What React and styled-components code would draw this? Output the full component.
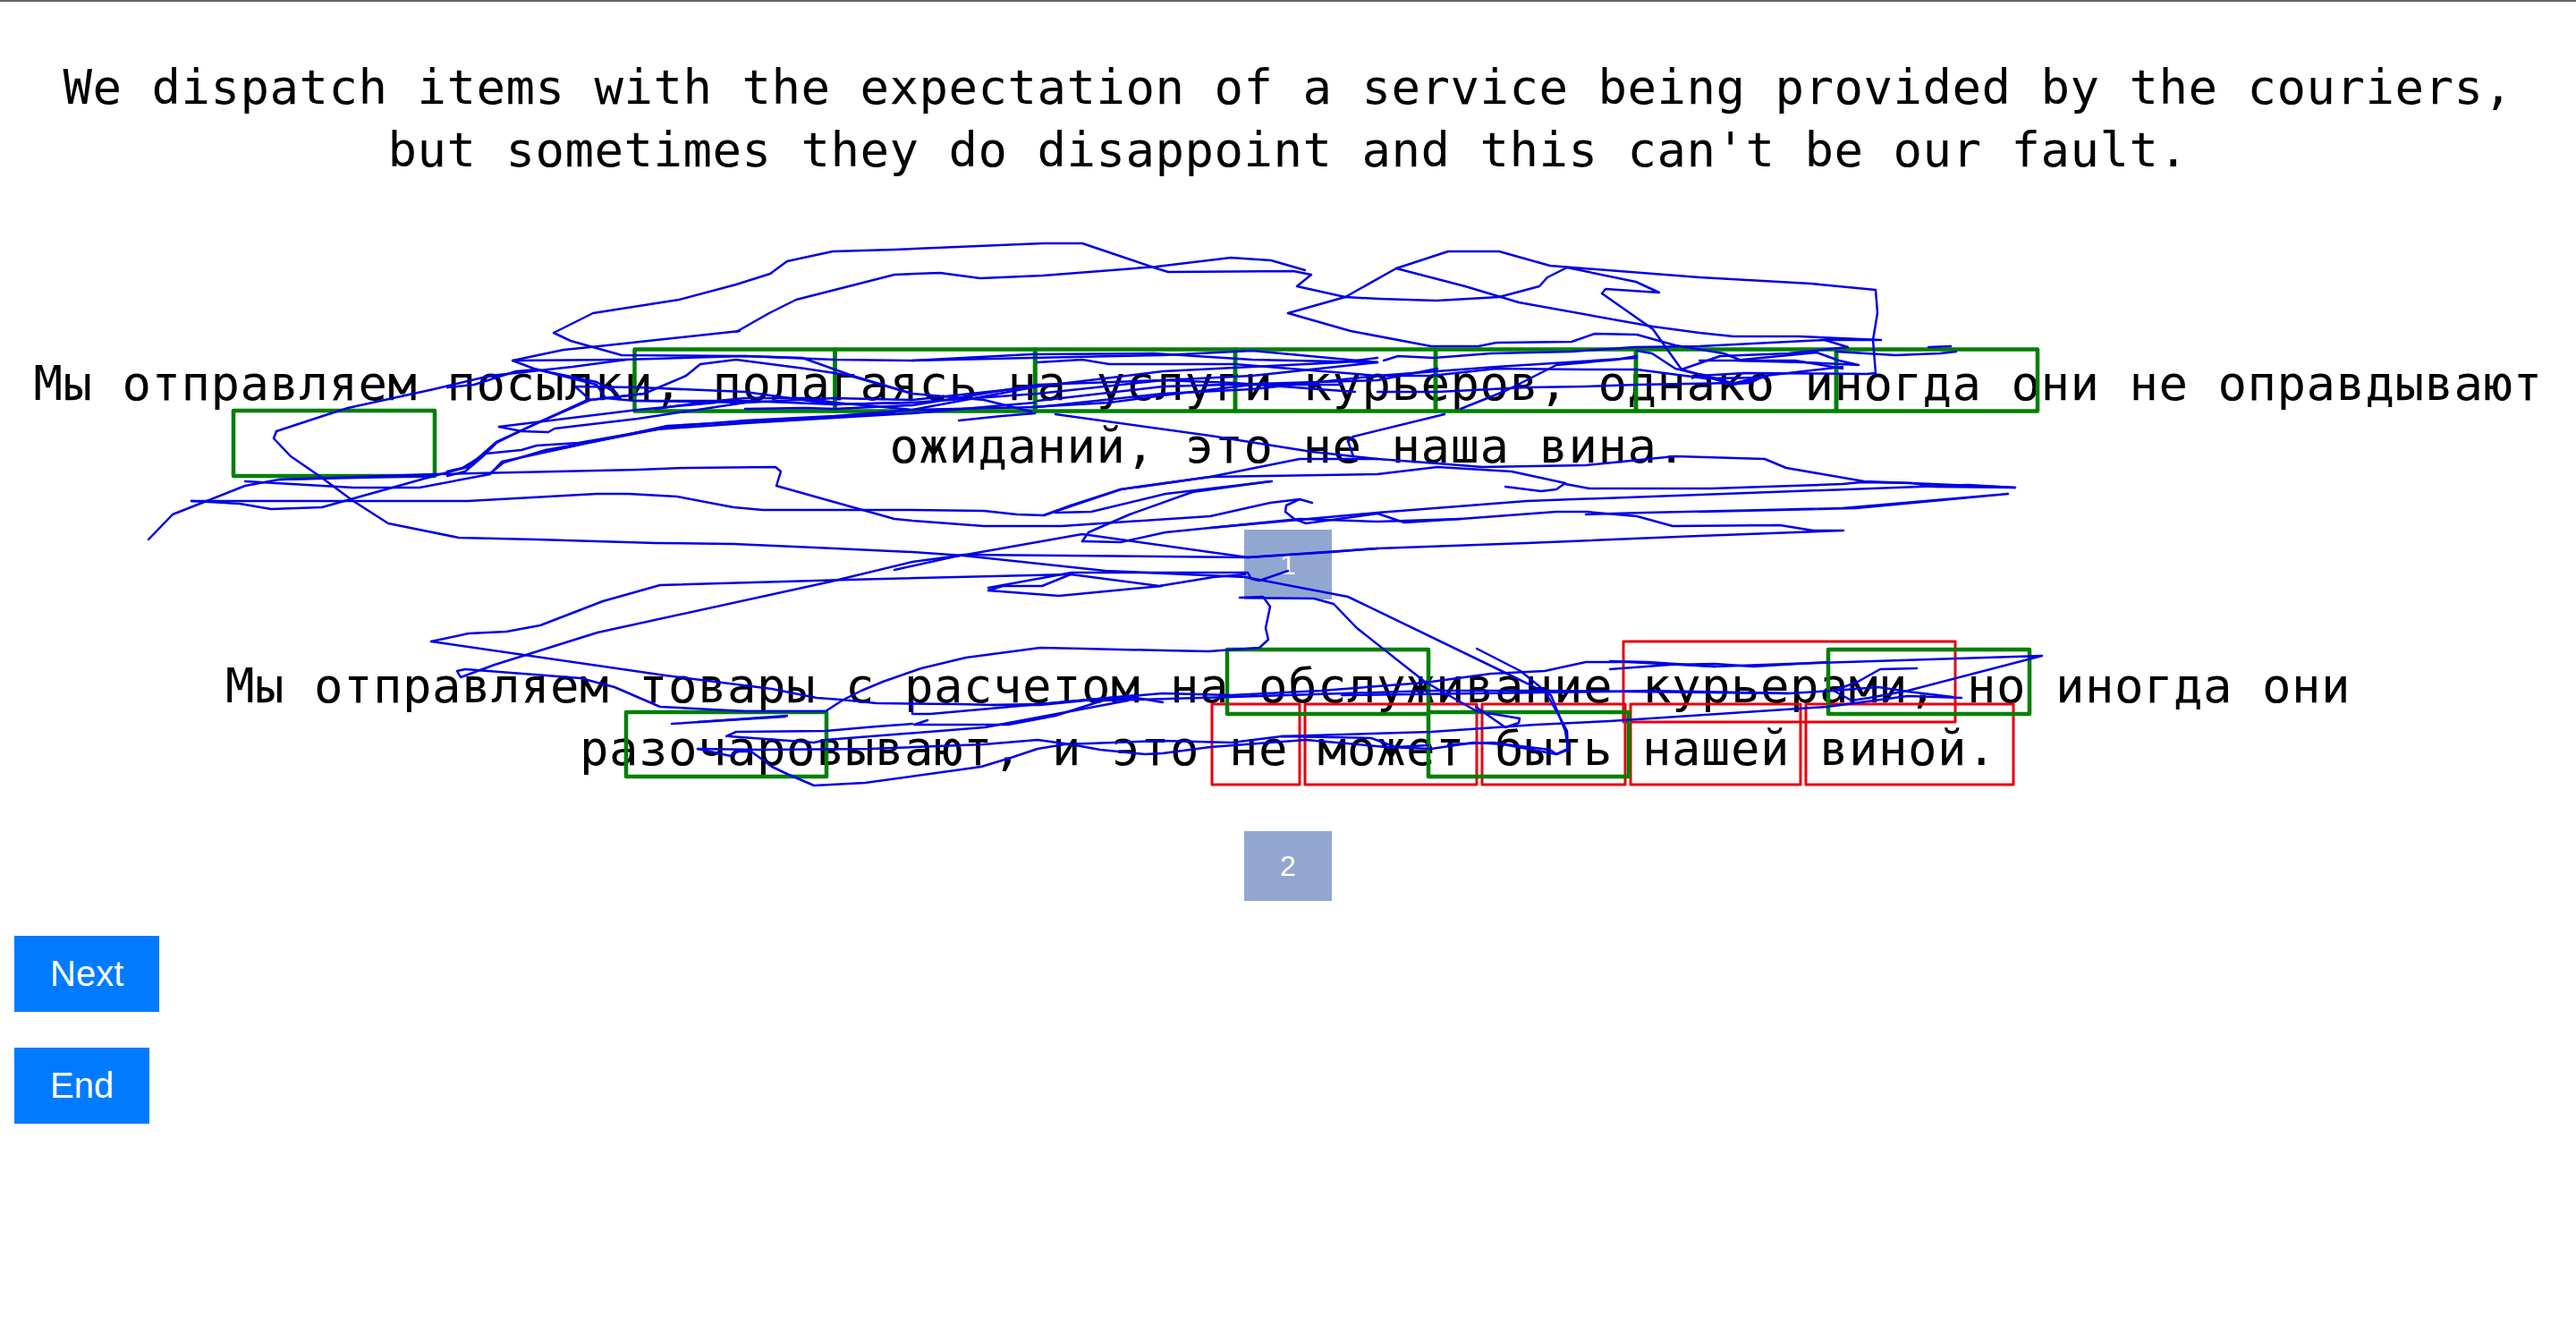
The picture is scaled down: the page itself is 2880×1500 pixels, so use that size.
import React from "react";
import styled, { createGlobalStyle } from "styled-components";

const Global = createGlobalStyle`
  html, body { margin: 0; padding: 0; background: #fff; }
`;

const Page = styled.main`
  position: relative;
  width: 2880px;
  height: 1500px;
  overflow: hidden;
  background: #fff;
`;
const TopRule = styled.hr`
  margin: 0;
  border: 0;
  height: 2px;
  background: #666;
`;
const Content = styled.div`
  display: flex;
  flex-direction: column;
  padding: 61px 16px 0;
`;
const Sentence = styled.p`
  margin: ${(p) => p.$top}px 0 0;
  font-family: "DejaVu Sans Mono", monospace;
  font-size: 54px;
  letter-spacing: 0.49px;
  line-height: 70px;
  color: #000;
  text-align: center;
`;
const Badge = styled.div`
  align-self: center;
  margin-top: ${(p) => p.$top}px;
  width: 98px;
  height: 78px;
  display: flex;
  align-items: center;
  justify-content: center;
  background: #92a7d0;
  color: #fff;
  font-family: "Liberation Sans", Arial, sans-serif;
  font-size: 32px;
`;
const Action = styled.button`
  align-self: flex-start;
  margin-top: ${(p) => p.$top}px;
  height: 85px;
  padding: 0 40px;
  border: 0;
  background: #007bff;
  color: #fff;
  font-family: "Liberation Sans", Arial, sans-serif;
  font-size: 40px;
`;
const Overlay = styled.svg`
  position: absolute;
  left: 0;
  top: 0;
  pointer-events: none;
`;
const Box = styled.rect`
  fill: none;
  stroke: ${(p) => (p.$tone === "green" ? "#008000" : "#e8000f")};
  stroke-width: ${(p) => (p.$tone === "green" ? 4.5 : 3)}px;
  stroke-linejoin: round;
`;
const Trace = styled.polyline`
  fill: none;
  stroke: #0000e6;
  stroke-width: 2.5px;
  stroke-linejoin: round;
  stroke-linecap: round;
`;

const redBoxes = [
  [1815, 717, 371, 90], [1355, 787, 98, 90], [1459, 787, 192, 90], [1657, 787, 160, 90],
  [1823, 787, 190, 90], [2019, 787, 232, 90],
];
const greenBoxes = [
  [261, 459, 225, 73], [709.5, 390.5, 224, 69], [933.5, 390.5, 224, 69], [1157, 390.5, 224, 69],
  [1381, 390.5, 224, 69], [1605, 390.5, 224, 69], [1829, 390.5, 224, 69], [2053, 390.5, 225, 69],
  [1372, 726, 225, 72], [2044, 726, 225, 72], [1597, 796, 224, 72], [700, 796, 224, 72],
];

const traces = [
  "166,603 193,575 274,543 312,536 485,530 713,525 767,523 867,522 873,527 868,543 1000,580 1020,582 1100,588 1187,588 1353,577 1420,562 1453,558 1467,562",
  "1453,558 1438,565 1437,572 1447,580 1460,585 1540,574 1570,584 1633,580 1740,572 1773,572 1830,577 1870,588 1990,587 2027,593 2061,593 1900,599 1707,607 1540,613 1395,623 1210,597 1080,620 1020,628 929,650 668,707 553,743 515,757 511,750 520,748 649,758 687,768 738,790 834,795 923,795 943,782 963,772 987,762 1030,747 1080,735 1163,724 1210,725 1300,727 1351,728 1408,724 1418,715 1415,702 1420,678 1412,667 1386,668 1469,669 1491,675 1517,702 1593,762 1651,795 1699,803 1698,808 1683,813 1650,790",
  "880,292 931,281 1000,279 1166,272 1210,272 1293,300 1306,304 1446,303 1466,307 1450,320 1504,332 1561,300 1619,281 1676,281 1733,297 1900,310 2025,317 2097,324 2099,350 2094,380 2097,417 2087,418 1950,417 1900,420",
  "880,292 861,306 823,318 759,335 663,350 619,372 638,381 695,397 833,398 897,400 953,420 1020,440",
  "823,371 860,350 890,335 1000,307 1051,305 1096,311 1166,308 1293,298 1376,288 1421,291 1459,302",
  "827,370 660,388 630,391 573,403 597,412 667,430 677,445 710,448 833,448 933,452 1020,450",
  "573,403 697,402 833,398 933,402 1020,403 1153,400 1300,397 1400,392 1540,405",
  "500,433 530,430 577,415 600,413 667,427 690,440",
  "643,432 660,447 720,440 767,420 783,407 823,402 900,412 933,417 950,420 1020,440 1100,447 1153,460",
  "643,432 713,433 833,438 933,452 1020,450 1160,440 1300,425 1400,420 1540,405",
  "713,448 833,450 933,445 1020,447 1160,432 1300,415 1500,405 1540,400",
  "733,457 783,450 833,445 900,445 933,450 1020,458 1160,455 1300,440 1400,435 1540,420 1673,410 1830,400",
  "833,457 900,456 933,457 1020,453 1160,430 1300,425 1380,428 1515,438",
  "558,477 583,482 613,483 620,479 713,468 833,450",
  "558,477 713,458 800,450",
  "555,495 600,473 660,447 720,440",
  "555,495 540,510 520,527 500,532",
  "500,527 517,523 543,507 583,503 600,498 647,495 733,480 833,473 933,467 1020,462 1157,450",
  "547,530 563,517 610,503 667,493 750,477 833,470 933,465 1020,458 1160,432",
  "214,560 523,560 667,552 703,552 757,555 820,567 853,570 1020,570 1100,571 1137,575 1167,576 1197,565 1253,547 1353,533 1540,530 1607,522 1690,527 1750,540 1740,547 1723,549 1683,544",
  "214,560 268,563 303,569 360,567 485,532",
  "274,538 395,545 469,545 548,530 561,516 746,476 1000,462",
  "657,447 555,494 523,522 485,532 312,536",
  "370,462 309,482 306,490 325,510 357,532 395,560 434,585 513,601 600,603 733,607 820,608 933,613 1020,617 1077,621 1236,638 1392,645 1507,667 1683,752 1734,777 1750,817 1753,837 1740,843 1670,830 1619,832",
  "370,462 389,456 485,435 548,420 640,410 700,402",
  "1750,541 1777,546 1913,546 2060,541 2081,539 2137,540 2162,544 2253,545 2200,542 1900,553 1707,560 1540,573 1353,590",
  "1167,576 1253,547 1353,533 1453,513 1540,513 1607,518 1657,522 1773,520 1823,515 1873,510 1973,513 1997,523 2084,538 2137,540 2253,545",
  "1180,573 1220,572 1303,552 1422,538",
  "1210,605 1217,595 1233,588 1263,575 1333,550 1420,538",
  "1210,605 1253,606 1303,595 1353,590 1453,580 1540,583 1633,580",
  "1773,575 1840,573 1973,570 2060,568 2245,552 2075,568 1900,572",
  "1157,462 1120,465 1072,470",
  "1180,463 1353,487 1467,505 1540,513",
  "1507,493 1513,488 1615,463",
  "1513,488 1507,493 1513,510",
  "1020,403 1153,396 1290,395 1400,402 1540,405",
  "1160,405 1210,402 1240,407 1380,407 1540,420 1600,420 1673,412 1773,413 1830,413 1907,423 1973,422",
  "1440,350 1510,370 1600,387 1653,387 1673,383 1757,382 1783,373 1830,374 1873,386 1927,395 1947,403 2007,403 2060,412",
  "1504,332 1440,350",
  "1547,403 1563,398 1603,400 1667,395 1757,393 1827,388 1900,387 2040,380 2103,380 2012,376 1938,376 1900,372 1848,365 1698,338 1638,320 1561,300",
  "1791,328 1795,323 1855,327 1829,315 1752,299 1730,310 1721,320 1676,332 1606,336 1542,334 1504,332",
  "1791,328 1848,368 1880,413 1938,430 1976,420",
  "1880,413 1923,398 2000,395 2066,388 2040,380",
  "1540,438 1607,438 1707,433 1773,432 1830,430 1940,428 1973,420 2060,410",
  "1633,457 1683,437 1740,408 1807,402 1830,398",
  "1830,392 1847,395 1873,412 1907,420 1940,429 1957,428 1973,420",
  "1900,403 1938,403 2031,394 2056,403 2078,408 2016,405 1938,403",
  "2053,393 2119,397 2169,395 2187,393",
  "2156,388 2181,387",
  "1160,448 1300,432 1540,425 1607,412",
  "1153,455 1240,450 1300,442 1400,430 1500,430",
  "1105,660 1121,655 1165,655 1197,642 1296,655 1357,645 1392,642",
  "1105,660 1184,666 1299,655",
  "1105,657 1198,640 1395,640 1399,647 1408,649 1440,638",
  "1000,637 1077,620 1395,623 1489,617 1540,613",
  "482,717 524,708 566,706 604,699 674,672 738,654 948,648 1197,642",
  "482,717 744,755 863,770 913,780 940,782 980,786 1070,787 1113,788 1163,788 1213,783 1270,780 1300,785",
  "1110,788 1163,787 1240,780 1300,775 1377,777 1477,772 1593,763 1667,753 1727,750 1773,740 1820,740 1917,745 2000,742 2283,733 2133,772 2090,780 2070,783 2050,772 2100,768 2133,773 2183,779",
  "1022,798 1040,798 1163,787 1273,777",
  "1037,805 1022,810 1127,810 1180,800 1233,783 1273,782 1377,779 1600,772 1727,772 1820,773 2000,775 2050,772 2077,762 2102,748 2143,747",
  "1020,783 1020,798",
  "780,807 880,800",
  "812,823 823,818 923,817 980,812 1020,809",
  "815,823 910,830 923,827 1101,813 1261,783",
  "751,809 878,801",
  "780,837 817,845 823,840 840,840 863,857 880,865 910,878 967,875 1097,857 1130,847 1160,837 1190,832 1300,828 1377,830 1433,823 1533,825 1560,835 1597,833",
  "780,837 850,838 973,837 1100,832 1160,827 1197,832 1230,838 1280,843 1300,842 1353,835 1460,827 1550,835 1600,837 1647,830 1683,832 1733,838 1740,843 1753,838 1752,817 1743,800 1727,772 1700,750 1651,725",
  "1433,823 1600,818 1717,810 1800,806 2043,790 2133,778 2193,780",
  "1800,739 1843,740 1917,745",
  "1800,748 1867,743 1917,742 1960,745 2043,740",
  "1500,777 1800,773 1843,772 2000,775",
];

export default function App() {
  return (
    <Page>
      <Global />
      <TopRule />
      <Content>
        <Sentence $top={0}>
          We dispatch items with the expectation of a service being provided by the couriers, but sometimes they do disappoint and this can't be our fault.
        </Sentence>
        <Sentence $top={191}>
          Мы отправляем посылки, полагаясь на услуги курьеров, однако иногда они не оправдывают ожиданий, это не наша вина.
        </Sentence>
        <Badge $top={58}>1</Badge>
        <Sentence $top={62}>
          Мы отправляем товары с расчетом на обслуживание курьерами, но иногда они разочаровывают, и это не может быть нашей виной.
        </Sentence>
        <Badge $top={57}>2</Badge>
        <Action $top={39}>Next</Action>
        <Action $top={40}>End</Action>
      </Content>
      <Overlay width="2880" height="1500" viewBox="0 0 2880 1500">
        {redBoxes.map(([x, y, w, h]) => (
          <Box key={`r${x}${y}`} $tone="red" x={x} y={y} width={w} height={h} />
        ))}
        {greenBoxes.map(([x, y, w, h]) => (
          <Box key={`g${x}${y}`} $tone="green" x={x} y={y} width={w} height={h} />
        ))}
        {traces.map((points, i) => (
          <Trace key={i} points={points} />
        ))}
      </Overlay>
    </Page>
  );
}
